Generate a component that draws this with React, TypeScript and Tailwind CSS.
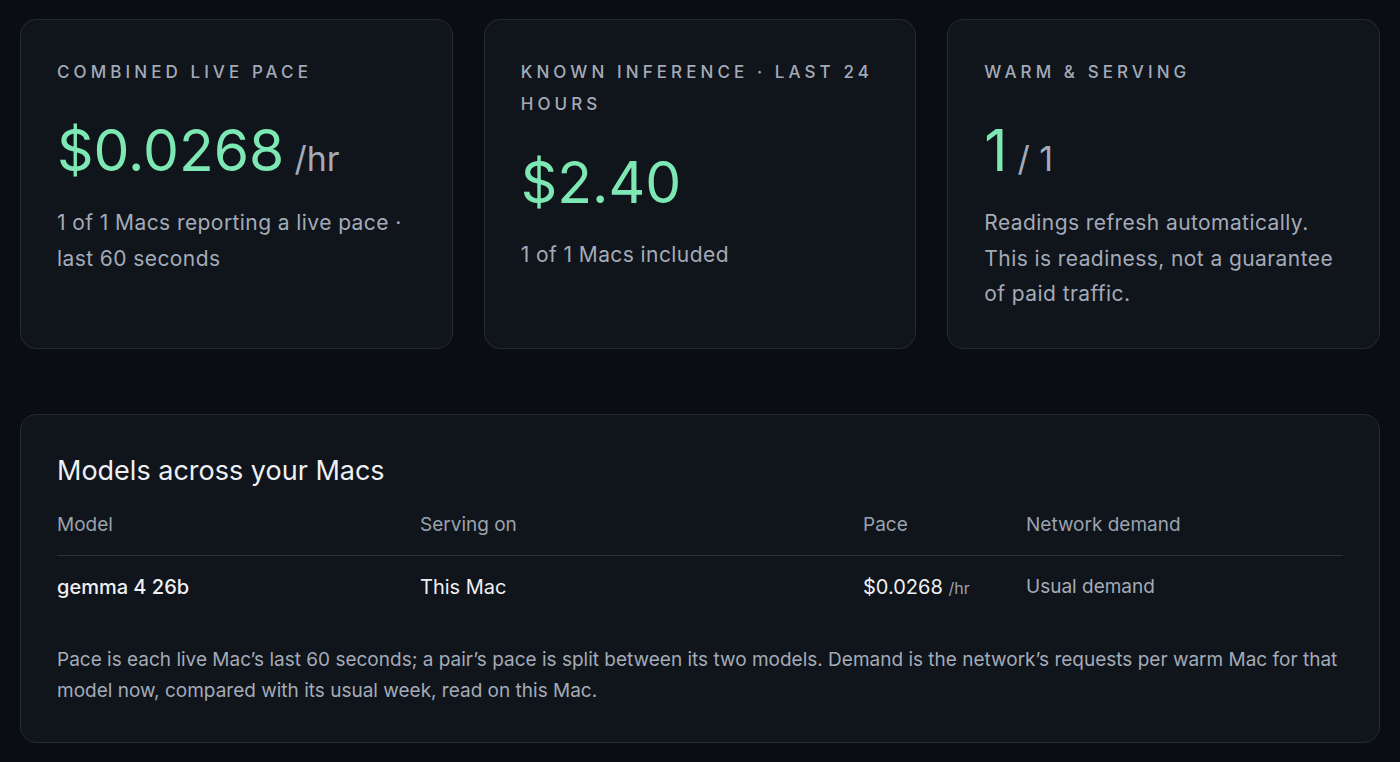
import React from "react";

const stats = [
  {
    label: "Combined live pace",
    value: "$0.0268",
    unit: "/hr",
    note: "1 of 1 Macs reporting a live pace · last 60 seconds",
  },
  {
    label: "Known inference · last 24 hours",
    value: "$2.40",
    unit: "",
    note: "1 of 1 Macs included",
  },
  {
    label: "Warm & serving",
    value: "1",
    unit: "/ 1",
    note: "Readings refresh automatically. This is readiness, not a guarantee of paid traffic.",
  },
];

function StatCard({ label, value, unit, note }: (typeof stats)[number]) {
  return (
    <div className="rounded-2xl border border-[#252a33] bg-[#10141b] p-9">
      <div className="text-[17px] font-medium uppercase leading-8 tracking-[0.24em] text-[#a3abb8]">
        {label}
      </div>
      <div className="mt-[34px] mb-[13px] flex h-[70px] items-baseline gap-[10px]">
        <span className="text-[57px] leading-none text-[#7ee8b4]">{value}</span>
        {unit && <span className="text-[34px] leading-none text-[#a3abb8]">{unit}</span>}
      </div>
      <p className="text-[21px] leading-[35.5px] tracking-[0.02em] text-[#a3abb8]">{note}</p>
    </div>
  );
}

export default function App() {
  return (
    <main
      className="min-h-screen bg-[#0a0d12] px-5 pt-[19px] pb-5"
      style={{ fontFamily: "Inter, 'Noto Sans', sans-serif" }}
    >
      <div className="grid grid-cols-3 gap-[31px]">
        {stats.map((s) => (
          <StatCard key={s.label} {...s} />
        ))}
      </div>

      <section className="mt-[65px] rounded-2xl border border-[#252a33] bg-[#10141b] p-9">
        <h2 className="text-[27px] leading-10 text-[#eef0f3]">Models across your Macs</h2>

        <div className="mt-5 grid grid-cols-[363px_443px_163px_1fr] border-b border-[#2a303a] pb-4 text-[19px] leading-7 text-[#9aa2ae]">
          <div>Model</div>
          <div>Serving on</div>
          <div>Pace</div>
          <div>Network demand</div>
        </div>

        <div className="grid grid-cols-[363px_443px_163px_1fr] pt-[17px] text-[20px] leading-7">
          <div className="font-medium text-[#eef0f3]">gemma 4 26b</div>
          <div className="text-[#eef0f3]">This Mac</div>
          <div className="text-[#eef0f3]">
            $0.0268 <span className="text-[16px] text-[#9aa2ae]">/hr</span>
          </div>
          <div className="text-[19px] text-[#a3abb8]">Usual demand</div>
        </div>

        <p className="mt-[42px] text-[19px] leading-[31px] text-[#a3abb8]">
          Pace is each live Mac’s last 60 seconds; a pair’s pace is split between its two models. Demand is the
          network’s requests per warm Mac for that model now, compared with its usual week, read on this Mac.
        </p>
      </section>
    </main>
  );
}
